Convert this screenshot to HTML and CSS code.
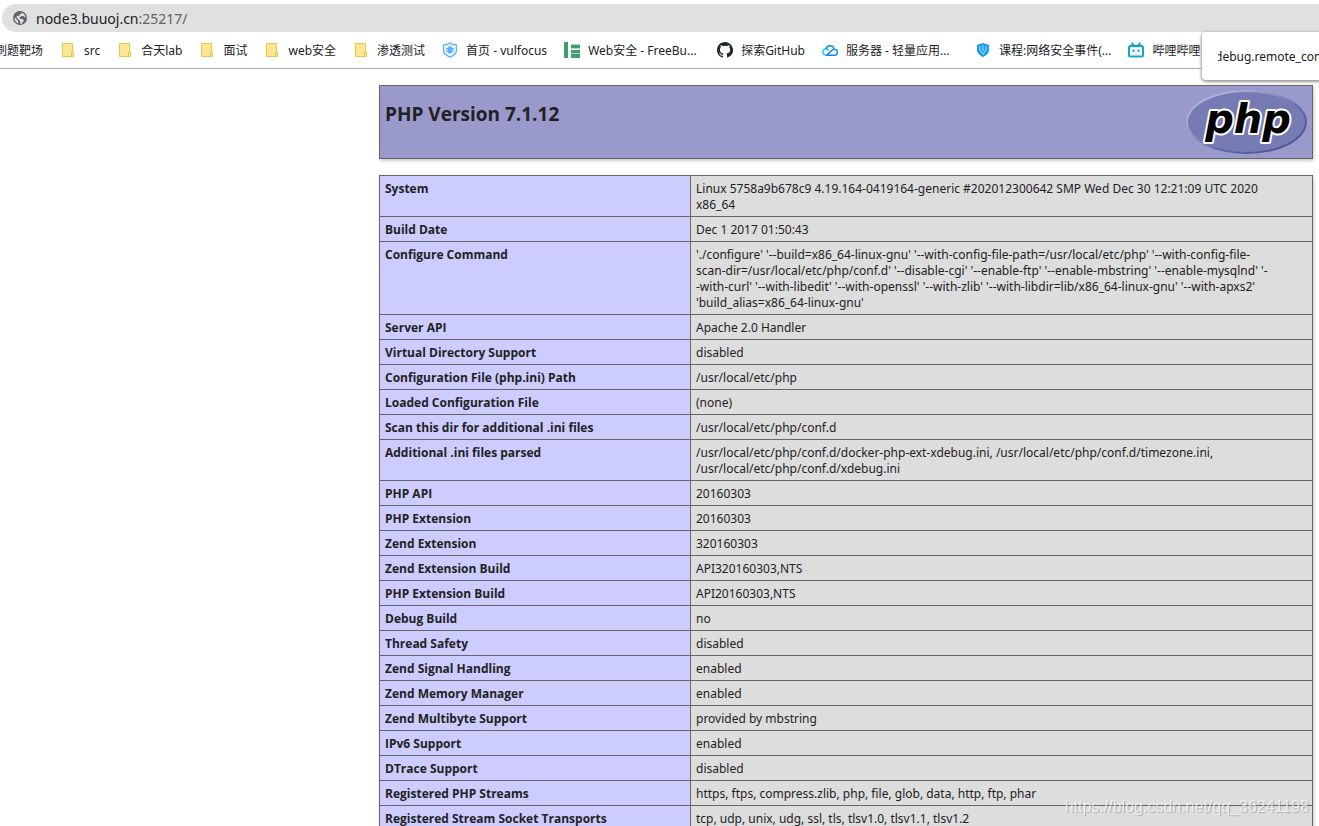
FILE: index.html
```html
<!DOCTYPE html>
<html lang="zh-CN">
<head>
<meta charset="utf-8">
<title>phpinfo()</title>
<link rel="stylesheet" href="styles.css">
</head>
<body>
<svg class="defs" aria-hidden="true">
  <symbol id="folder" viewBox="0 0 16 16"><path d="M2.5 1.5h10v9h1v4h-11z" fill="#ffe694" stroke="#e8c64a"/><path d="M11.5 14v-3.5h2" fill="none" stroke="#e8c64a"/></symbol>
</svg>
<header class="browser">
  <div class="address">
    <svg class="globe" viewBox="0 0 16 16"><circle cx="8" cy="8" r="7" fill="#5f6368"/><path d="M2.6 7.2l3.6 3.5v2.9C3.9 12.8 2.300 10.300 2.600 7.200zM9.500 2.400c2.300.6 4 2.700 4.200 5.200-.8 0-1.500-.8-2.300-1.600H9.600L7.200 7.800l1.600 1.300h2.200l.8 1.700-1.900 2.600-1.800.3V11L4.700 7.400l.2-1.700h2.700V4.200l1.900-.4z" fill="#e0e0e0"/></svg>
    <span class="url">node3.buuoj.cn<span class="port">:25217/</span></span>
  </div>
  <nav class="bookmarks">
    <a class="bookmark first" href="#">刷题靶场</a>
    <a class="bookmark" href="#"><svg><use href="#folder"/></svg>src</a>
    <a class="bookmark" href="#"><svg><use href="#folder"/></svg>合天lab</a>
    <a class="bookmark" href="#"><svg><use href="#folder"/></svg>面试</a>
    <a class="bookmark" href="#"><svg><use href="#folder"/></svg>web安全</a>
    <a class="bookmark" href="#"><svg><use href="#folder"/></svg>渗透测试</a>
    <a class="bookmark" href="#"><svg viewBox="0 0 16 16"><path d="M8 .8l2 1.400 4.500.8v5.500c0 3-3 5.300-6.500 6.700C4.500 13.800 1.500 11.500 1.500 8.500V3L6 2.200z" fill="#eaf5ff" stroke="#5aaeff" stroke-width="1.300"/><path d="M6.200 5.800a1.800 1.800 0 0 1 3.600 0l.7.700v3.500L9.500 11.200h-3L5.500 10V6.500z" fill="#5aaeff"/><path d="M4 6.500h8M4 9h8" stroke="#5aaeff"/></svg>首页 - vulfocus</a>
    <a class="bookmark long" href="#"><svg viewBox="0 0 16 16"><path d="M0 0h4v16H0zM7 3h9v3H7zM7 8h9v8H7z" fill="#3f9f68"/><path d="M7 6h9v1H7zM7 2h9v1H7zM7 11h9v1H7z" fill="#a9d5ba"/></svg>Web安全 - FreeBu...</a>
    <a class="bookmark" href="#"><svg viewBox="0 0 16 16"><path d="M8 0C3.580 0 0 3.580 0 8c0 3.540 2.290 6.530 5.470 7.590.4.070.55-.17.55-.38v-1.490c-2.010.37-2.530-.49-2.690-.94-.09-.23-.48-.94-.82-1.130-.28-.15-.68-.52-.01-.53.630-.01 1.080.58 1.230.82.720 1.210 1.870.87 2.330.66.070-.52.280-.87.510-1.070-1.780-.2-3.640-.89-3.640-3.950 0-.87.310-1.590.82-2.150-.08-.2-.36-1.020.080-2.120 0 0 .67-.21 2.200.82a7.600 7.600 0 0 1 4 0c1.530-1.040 2.200-.82 2.200-.82.440 1.100.16 1.920.08 2.120.51.56.82 1.270.82 2.150 0 3.070-1.870 3.750-3.650 3.950.29.250.54.730.54 1.480v2.200c0 .21.150.46.550.38A8 8 0 0 0 8 0z" fill="#24292e"/></svg>探索GitHub</a>
    <a class="bookmark long" href="#"><svg viewBox="0 0 16 16"><path d="M3.800 13.200h8.300a3 3 0 0 0 .5-6c-1.300-.2-2.200.6-3 1.400l-4.400 4.200" fill="none" stroke="#1683ff" stroke-width="1.500"/><path d="M4 13.200a3 3 0 0 1 0-6.200c1.200 0 2 .5 3 1.500" fill="none" stroke="#12cdf5" stroke-width="1.500"/><path d="M4 7a4.200 4.200 0 0 1 8.200.2" fill="none" stroke="#1683ff" stroke-width="1.500"/></svg>服务器 - 轻量应用...</a>
    <a class="bookmark long" href="#"><svg viewBox="0 0 16 16"><path d="M8 1l6 2v5c0 3-3 5.500-6 7-3-1.500-6-4-6-7V3z" fill="#159be8"/><path d="M5 4v4l3 4 3-4V4M8 3v6" fill="none" stroke="#8ddcff" stroke-width="1.200"/></svg>课程:网络安全事件(...</a>
    <a class="bookmark" href="#"><svg viewBox="0 0 16 16"><path d="M3.500 1l2.500 2.500M12.500 1L10 3.500" stroke="#12a5dc" stroke-width="2"/><rect x="1" y="4" width="14" height="10.500" rx="1.500" fill="none" stroke="#12a5dc" stroke-width="2"/><path d="M5.500 7.500v2.500M10.500 7.500v2.500" stroke="#12a5dc" stroke-width="1.800"/></svg>哔哩哔哩</a>
  </nav>
  <div class="popup"><span>debug.remote_connect_back</span></div>
</header>
<main class="page">
  <section class="banner">
    <h1>PHP Version 7.1.12</h1>
    <svg class="logo" viewBox="0 0 121 64" role="img" aria-label="PHP logo">
      <defs>
        <linearGradient id="rim" x1="0" y1="0" x2="1" y2="1"><stop offset="0" stop-color="#c2c4e4"/><stop offset=".35" stop-color="#9a9bcc"/><stop offset=".6" stop-color="#6468a7"/><stop offset="1" stop-color="#484889"/></linearGradient>
      </defs>
      <ellipse cx="60.500" cy="32" rx="60.500" ry="32" fill="url(#rim)"/>
      <ellipse cx="60.500" cy="32" rx="58.500" ry="30" fill="#777bb3"/>
      <text class="wordmark" x="62" y="43" text-anchor="middle">php</text>
    </svg>
  </section>
  <table class="info">
    <tr><th scope="row">System</th><td>Linux 5758a9b678c9 4.19.164-0419164-generic #202012300642 SMP Wed Dec 30 12:21:09 UTC 2020<br>x86_64</td></tr>
    <tr><th scope="row">Build Date</th><td>Dec 1 2017 01:50:43</td></tr>
    <tr><th scope="row">Configure Command</th><td>'./configure' '--build=x86_64-linux-gnu' '--with-config-file-path=/usr/local/etc/php' '--with-config-file-<br>scan-dir=/usr/local/etc/php/conf.d' '--disable-cgi' '--enable-ftp' '--enable-mbstring' '--enable-mysqlnd' '-<br>-with-curl' '--with-libedit' '--with-openssl' '--with-zlib' '--with-libdir=lib/x86_64-linux-gnu' '--with-apxs2'<br>'build_alias=x86_64-linux-gnu'</td></tr>
    <tr><th scope="row">Server API</th><td>Apache 2.0 Handler</td></tr>
    <tr><th scope="row">Virtual Directory Support</th><td>disabled</td></tr>
    <tr><th scope="row">Configuration File (php.ini) Path</th><td>/usr/local/etc/php</td></tr>
    <tr><th scope="row">Loaded Configuration File</th><td>(none)</td></tr>
    <tr><th scope="row">Scan this dir for additional .ini files</th><td>/usr/local/etc/php/conf.d</td></tr>
    <tr><th scope="row">Additional .ini files parsed</th><td>/usr/local/etc/php/conf.d/docker-php-ext-xdebug.ini, /usr/local/etc/php/conf.d/timezone.ini,<br>/usr/local/etc/php/conf.d/xdebug.ini</td></tr>
    <tr><th scope="row">PHP API</th><td>20160303</td></tr>
    <tr><th scope="row">PHP Extension</th><td>20160303</td></tr>
    <tr><th scope="row">Zend Extension</th><td>320160303</td></tr>
    <tr><th scope="row">Zend Extension Build</th><td>API320160303,NTS</td></tr>
    <tr><th scope="row">PHP Extension Build</th><td>API20160303,NTS</td></tr>
    <tr><th scope="row">Debug Build</th><td>no</td></tr>
    <tr><th scope="row">Thread Safety</th><td>disabled</td></tr>
    <tr><th scope="row">Zend Signal Handling</th><td>enabled</td></tr>
    <tr><th scope="row">Zend Memory Manager</th><td>enabled</td></tr>
    <tr><th scope="row">Zend Multibyte Support</th><td>provided by mbstring</td></tr>
    <tr><th scope="row">IPv6 Support</th><td>enabled</td></tr>
    <tr><th scope="row">DTrace Support</th><td>disabled</td></tr>
    <tr><th scope="row">Registered PHP Streams</th><td>https, ftps, compress.zlib, php, file, glob, data, http, ftp, phar</td></tr>
    <tr><th scope="row">Registered Stream Socket Transports</th><td>tcp, udp, unix, udg, ssl, tls, tlsv1.0, tlsv1.1, tlsv1.2</td></tr>
  </table>
</main>
<div class="watermark">https://blog.csdn.net/qq_36241198</div>
</body>
</html>
```

FILE: styles.css
```css
* { box-sizing: border-box; }
html { height: 100%; overflow: hidden; }
body {
  margin: 0;
  height: 100%;
  overflow: hidden;
  background: #fff;
  color: #222;
  font-family: "Noto Sans", "Noto Sans CJK SC", sans-serif;
  font-size: 12px;
}
.defs { position: absolute; width: 0; height: 0; }
.browser { position: relative; padding-top: 4px; border-bottom: 1px solid #aaa; }
.address {
  display: flex;
  align-items: center;
  gap: 8px;
  height: 28px;
  margin-left: 2px;
  padding-left: 10px;
  border-radius: 14px 0 0 14px;
  background: #e0e0e0;
}
.globe { width: 16px; height: 16px; }
.url { font-size: 14px; color: #202124; }
.port { color: #5f6368; }
.bookmarks { display: flex; gap: 17px; height: 36px; overflow: hidden; }
.bookmark {
  display: flex;
  flex: none;
  align-items: center;
  gap: 8px;
  color: #202124;
  text-decoration: none;
  white-space: nowrap;
}
.bookmark svg { width: 16px; height: 16px; }
.first { margin-left: -5px; }
.long { min-width: 136px; }
.popup {
  position: absolute;
  top: 32px;
  right: -5px;
  display: flex;
  align-items: center;
  width: 122px;
  height: 48px;
  padding-left: 16px;
  border-radius: 4px;
  background: #fff;
  box-shadow: 0 1px 3px 1px #999;
  color: #202124;
}
.popup span { overflow: hidden; text-indent: -3px; }
.page { max-width: 934px; margin: 16px 6px 0 auto; }
.banner {
  display: flex;
  justify-content: space-between;
  min-height: 74px;
  margin-bottom: 16px;
  padding: 4px 5px;
  border: 1px solid #666;
  background: #99c;
  box-shadow: 1px 2px 3px #ccc;
}
h1 { margin: 10px 0 0; font: bold 19px/28px "Open Sans", sans-serif; }
.logo { width: 121px; height: 64px; }
.wordmark {
  font: italic bold 40px "DejaVu Sans", sans-serif;
  fill: #000;
  stroke: #fff;
  stroke-width: 4px;
  stroke-linejoin: round;
  paint-order: stroke;
}
.info {
  width: 100%;
  border-collapse: collapse;
  box-shadow: 1px 2px 3px #ccc;
}
.info th, .info td {
  padding: 5px 5px 3px;
  border: 1px solid #666;
  line-height: 16px;
  text-align: left;
  vertical-align: top;
}
.info th { width: 311px; background: #ccf; font-family: "Open Sans", sans-serif; }
.info td { background: #ddd; }
.watermark {
  position: fixed;
  right: 10px;
  bottom: 8px;
  font: 16px/22px "Liberation Sans", sans-serif;
  color: rgba(255, 255, 255, .65);
  text-shadow: 1px 1px 1px rgba(120, 120, 120, .45);
}
```
